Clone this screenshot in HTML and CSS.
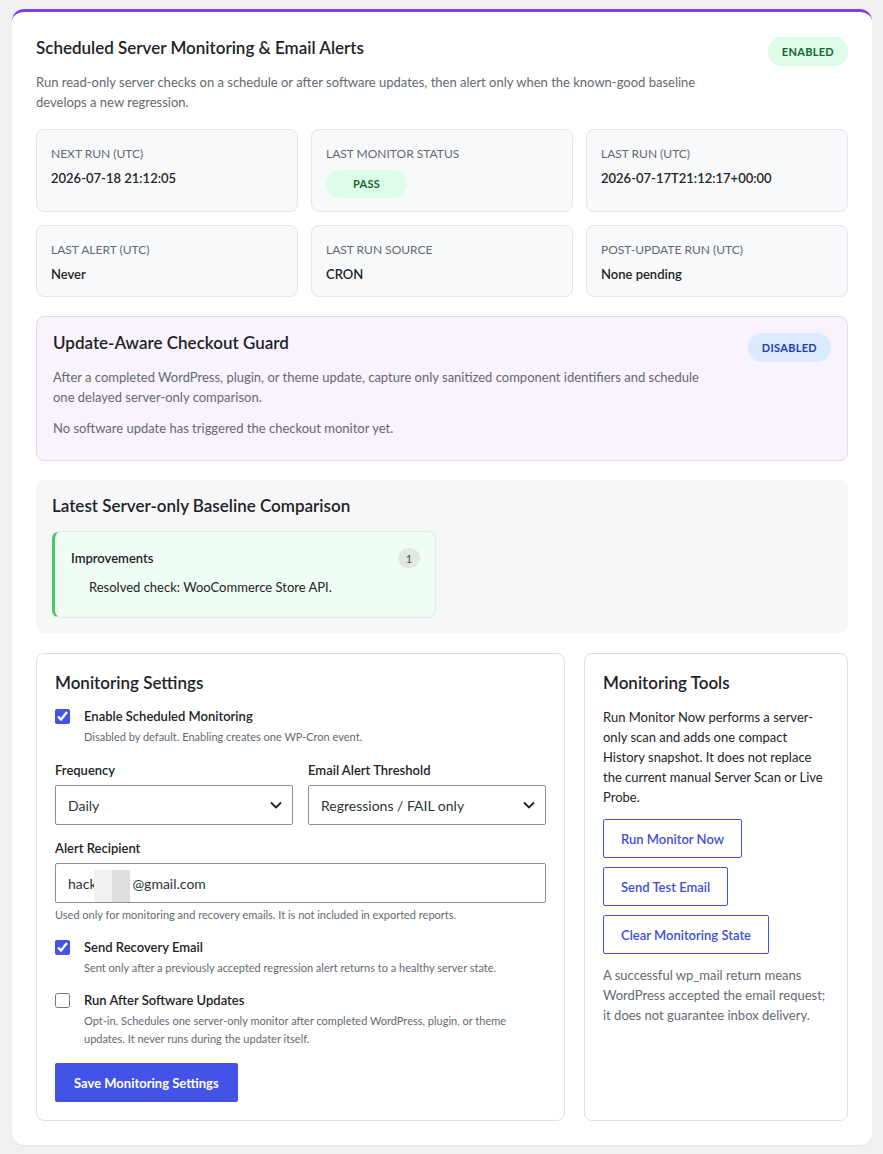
FILE: index.html
```html
<!DOCTYPE html>
<html lang="en">
<head>
    <meta charset="UTF-8">
    <meta name="viewport" content="width=device-width, initial-scale=1.0">
    <title>Scheduled Server Monitoring</title>
    <link rel="stylesheet" href="styles.css">
</head>
<body>
    <div class="panel">
        <div class="panel-head">
            <div>
                <h2 class="panel-title">Scheduled Server Monitoring &amp; Email Alerts</h2>
                <p class="muted">Run read-only server checks on a schedule or after software updates, then alert only when the known-good baseline develops a new regression.</p>
            </div>
            <span class="badge badge-green">ENABLED</span>
        </div>

        <div class="stats">
            <div class="stat">
                <div class="stat-label">NEXT RUN (UTC)</div>
                <div class="stat-value">2026-07-18 21:12:05</div>
            </div>
            <div class="stat">
                <div class="stat-label">LAST MONITOR STATUS</div>
                <span class="pill">PASS</span>
            </div>
            <div class="stat">
                <div class="stat-label">LAST RUN (UTC)</div>
                <div class="stat-value">2026-07-17T21:12:17+00:00</div>
            </div>
            <div class="stat">
                <div class="stat-label">LAST ALERT (UTC)</div>
                <div class="stat-value">Never</div>
            </div>
            <div class="stat">
                <div class="stat-label">LAST RUN SOURCE</div>
                <div class="stat-value">CRON</div>
            </div>
            <div class="stat">
                <div class="stat-label">POST-UPDATE RUN (UTC)</div>
                <div class="stat-value">None pending</div>
            </div>
        </div>

        <div class="guard">
            <div class="panel-head">
                <div>
                    <h3 class="section-title">Update-Aware Checkout Guard</h3>
                    <p class="muted">After a completed WordPress, plugin, or theme update, capture only sanitized component identifiers and schedule one delayed server-only comparison.</p>
                </div>
                <span class="badge badge-blue">DISABLED</span>
            </div>
            <p class="muted guard-note">No software update has triggered the checkout monitor yet.</p>
        </div>

        <div class="compare">
            <h3 class="section-title">Latest Server-only Baseline Comparison</h3>
            <div class="improve">
                <div class="improve-head">
                    <span>Improvements</span>
                    <span class="count">1</span>
                </div>
                <ul class="improve-list">
                    <li>Resolved check: WooCommerce Store API.</li>
                </ul>
            </div>
        </div>

        <div class="bottom">
            <div class="box">
                <h3 class="box-title">Monitoring Settings</h3>

                <label class="check">
                    <input type="checkbox" checked>
                    <span>
                        <strong>Enable Scheduled Monitoring</strong>
                        <small>Disabled by default. Enabling creates one WP-Cron event.</small>
                    </span>
                </label>

                <div class="field-row">
                    <div class="field">
                        <label for="freq">Frequency</label>
                        <select id="freq">
                            <option>Daily</option>
                        </select>
                    </div>
                    <div class="field">
                        <label for="threshold">Email Alert Threshold</label>
                        <select id="threshold">
                            <option>Regressions / FAIL only</option>
                        </select>
                    </div>
                </div>

                <div class="field field-last">
                    <label for="recipient">Alert Recipient</label>
                    <div class="input-wrap">
                        <input type="text" id="recipient" value="hack          @gmail.com">
                        <span class="redact"></span>
                    </div>
                    <small class="help">Used only for monitoring and recovery emails. It is not included in exported reports.</small>
                </div>

                <label class="check">
                    <input type="checkbox" checked>
                    <span>
                        <strong>Send Recovery Email</strong>
                        <small>Sent only after a previously accepted regression alert returns to a healthy server state.</small>
                    </span>
                </label>

                <label class="check check-last">
                    <input type="checkbox">
                    <span>
                        <strong>Run After Software Updates</strong>
                        <small>Opt-in. Schedules one server-only monitor after completed WordPress, plugin, or theme updates. It never runs during the updater itself.</small>
                    </span>
                </label>

                <button class="btn-primary">Save Monitoring Settings</button>
            </div>

            <div class="box tools">
                <h3 class="box-title">Monitoring Tools</h3>
                <p>Run Monitor Now performs a server-only scan and adds one compact History snapshot. It does not replace the current manual Server Scan or Live Probe.</p>
                <div class="tool-buttons">
                    <button class="btn-outline">Run Monitor Now</button>
                    <button class="btn-outline">Send Test Email</button>
                    <button class="btn-outline">Clear Monitoring State</button>
                </div>
                <p class="note">A successful wp_mail return means WordPress accepted the email request; it does not guarantee inbox delivery.</p>
            </div>
        </div>
    </div>
</body>
</html>
```

FILE: styles.css
```css
body {
    font-family: "Lato", "Noto Sans", sans-serif;
    background-color: #f0f0f1;
    margin: 0;
    padding: 9px 11px 9px 12px;
    color: #1d2327;
}

.panel {
    background-color: #fff;
    border-top: 3px solid #7b3fe4;
    border-radius: 12px;
    padding: 21px 24px 24px;
    box-shadow: 0 1px 2px rgba(0, 0, 0, 0.06);
}

.panel-head {
    display: flex;
    justify-content: space-between;
    align-items: flex-start;
    gap: 20px;
}

.panel-title {
    font-size: 17px;
    font-weight: 600;
    margin: 4px 0 14px;
}

.muted {
    font-size: 13px;
    line-height: 20px;
    color: #646970;
    margin: 0;
    max-width: 670px;
}

.badge {
    flex-shrink: 0;
    font-size: 11px;
    font-weight: 700;
    letter-spacing: 0.3px;
    padding: 8px 14px;
    border-radius: 14px;
    margin-top: 4px;
}

.badge-green {
    background-color: #dcfce7;
    color: #166534;
}

.badge-blue {
    background-color: #dbeafe;
    color: #1e40af;
}

.stats {
    display: grid;
    grid-template-columns: repeat(3, 1fr);
    grid-template-rows: 83px 72px;
    gap: 13px;
    margin-top: 17px;
}

.stat {
    background-color: #f8f9fb;
    border: 1px solid #e2e5ea;
    border-radius: 8px;
    padding: 16px 14px;
}

.stat-label {
    font-size: 12px;
    color: #646970;
    margin-bottom: 9px;
}

.stat-value {
    font-size: 13px;
    font-weight: 600;
}

.pill {
    display: inline-block;
    background-color: #dcfce7;
    color: #166534;
    font-size: 11px;
    font-weight: 700;
    letter-spacing: 0.3px;
    padding: 7px 27px 8px;
    border-radius: 14px;
}

.guard {
    background-color: #f8f3fd;
    border: 1px solid #e4daf2;
    border-radius: 8px;
    padding: 15px 16px 22px;
    margin-top: 19px;
}

.section-title {
    font-size: 17px;
    font-weight: 600;
    margin: 0 0 14px;
}

.guard .muted {
    max-width: 660px;
}

.guard .badge {
    margin-top: 1px;
}

.guard-note {
    margin-top: 11px;
}

.compare {
    background-color: #f6f7f9;
    border-radius: 8px;
    padding: 15px 16px 15px;
    margin-top: 19px;
}

.compare .section-title {
    margin-bottom: 15px;
}

.improve {
    width: 349px;
    background-color: #f0fdf4;
    border: 1px solid #d6f0df;
    border-left: 3px solid #4cc764;
    border-radius: 8px;
    padding: 16px 15px 22px 16px;
}

.improve-head {
    display: flex;
    justify-content: space-between;
    align-items: center;
    font-size: 13px;
    font-weight: 600;
}

.count {
    width: 22px;
    height: 20px;
    border-radius: 10px;
    background-color: #e1e7e2;
    color: #50575e;
    font-size: 11px;
    font-weight: 500;
    display: flex;
    align-items: center;
    justify-content: center;
}

.improve-list {
    list-style: none;
    margin: 11px 0 0;
    padding-left: 18px;
    font-size: 13px;
}

.bottom {
    display: grid;
    grid-template-columns: 1fr 264px;
    gap: 19px;
    margin-top: 20px;
}

.box {
    border: 1px solid #dcdfe4;
    border-radius: 8px;
    padding: 18px 18px 18px;
}

.box-title {
    font-size: 17px;
    font-weight: 600;
    margin: 0 0 16px;
}

.check {
    display: flex;
    gap: 14px;
    align-items: flex-start;
    margin-bottom: 16px;
}

.check-last {
    margin-bottom: 15px;
}

.check input {
    width: 15px;
    height: 15px;
    margin: 0;
    flex-shrink: 0;
    accent-color: #4353e6;
}

.check strong {
    display: block;
    font-size: 13px;
    font-weight: 600;
    line-height: 15px;
}

.check small {
    display: block;
    font-size: 11px;
    line-height: 18px;
    color: #646970;
    margin-top: 4px;
}

.field-row {
    display: grid;
    grid-template-columns: 1fr 1fr;
    gap: 15px;
}

.field {
    margin-bottom: 15px;
}

.field-last {
    margin-bottom: 19px;
}

.field label {
    display: block;
    font-size: 13px;
    font-weight: 600;
    margin-bottom: 7px;
}

.field select,
.field input {
    width: 100%;
    height: 40px;
    box-sizing: border-box;
    border: 1px solid #8c8f94;
    border-radius: 2px;
    background-color: #fff;
    font-family: inherit;
    font-size: 14px;
    color: #2c3338;
    padding: 0 12px;
}

.field select {
    appearance: none;
    background-image: url("data:image/svg+xml,%3Csvg xmlns='http://www.w3.org/2000/svg' width='12' height='8' viewBox='0 0 12 8'%3E%3Cpath d='M1 1.5l5 5 5-5' fill='none' stroke='%231d2327' stroke-width='1.8'/%3E%3C/svg%3E");
    background-repeat: no-repeat;
    background-position: right 10px center;
}

.input-wrap {
    position: relative;
}

/* blurred-out part of the address */
.redact {
    position: absolute;
    left: 39px;
    top: 7px;
    width: 36px;
    height: 32px;
    background: linear-gradient(90deg, #f1f1f1 0 50%, #dedede 50% 100%);
}

.help {
    display: block;
    font-size: 11px;
    color: #646970;
    margin-top: 5px;
}

.btn-primary {
    background-color: #4353e6;
    color: #fff;
    border: none;
    border-radius: 2px;
    font-family: inherit;
    font-size: 13px;
    font-weight: 700;
    padding: 0 19px;
    height: 39px;
    margin-top: 0;
}

.tools .box-title {
    margin-bottom: 14px;
}

.tools p {
    font-size: 13px;
    line-height: 20px;
    margin: 0;
}

.tool-buttons {
    display: flex;
    flex-direction: column;
    align-items: flex-start;
    gap: 9px;
    margin: 12px 0 11px;
}

.btn-outline {
    background-color: #fff;
    color: #3e4fd8;
    border: 1px solid #4353e6;
    border-radius: 2px;
    font-family: inherit;
    font-size: 13px;
    font-weight: 600;
    height: 39px;
    padding: 0 17px;
}

.tools .note {
    color: #646970;
}
```
